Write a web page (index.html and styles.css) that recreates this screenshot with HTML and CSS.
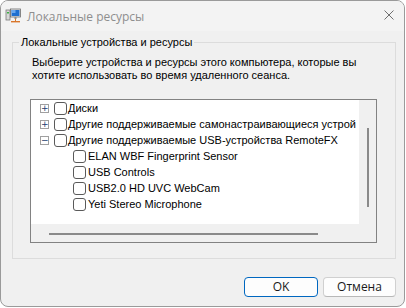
FILE: index.html
```html
<!DOCTYPE html>
<html lang="ru">
<head>
<meta charset="utf-8">
<title>Локальные ресурсы</title>
<link rel="stylesheet" href="styles.css">
</head>
<body>
<div class="window">
  <div class="titlebar">
    <svg class="app-icon" width="16" height="16" viewBox="0 0 16 16">
      <rect x="1" y="2" width="4" height="10" fill="#d8d8d8" stroke="#7a7a7a" stroke-width="0.8"/>
      <rect x="2" y="4" width="2" height="1.5" fill="#3cb043"/>
      <rect x="5.5" y="1" width="10" height="8" fill="#e8e8e8" stroke="#6b6b6b" stroke-width="0.8"/>
      <rect x="6.5" y="2" width="8" height="6" fill="#1f6fd0"/>
      <rect x="6.5" y="2" width="4" height="3" fill="#6aa8ee"/>
      <rect x="9.5" y="9" width="2" height="2" fill="#8a8a8a"/>
      <rect x="10" y="11" width="1" height="2" fill="#d9762b"/>
      <rect x="6" y="13" width="9" height="1.4" fill="#d9762b"/>
    </svg>
    <span class="title">Локальные ресурсы</span>
    <svg class="close" width="10" height="10" viewBox="0 0 10 10">
      <path d="M0.5 0.5 L9.5 9.5 M9.5 0.5 L0.5 9.5" stroke="#6e6e6e" stroke-width="1"/>
    </svg>
  </div>
  <div class="client">
    <fieldset class="group">
      <legend class="group-label">Локальные устройства и ресурсы</legend>
      <div class="group-body">
        <p class="desc">Выберите устройства и ресурсы этого компьютера, которые вы хотите использовать во время удаленного сеанса.</p>
        <div class="tree-box">
          <div class="tree-view">
            <div class="row">
              <span class="exp">+</span><span class="chk"></span><span class="label">Диски</span>
            </div>
            <div class="row">
              <span class="exp">+</span><span class="chk"></span><span class="label">Другие поддерживаемые самонастраивающиеся устрой</span>
            </div>
            <div class="row">
              <span class="exp minus">−</span><span class="chk"></span><span class="label">Другие поддерживаемые USB-устройства RemoteFX</span>
            </div>
            <div class="row child">
              <span class="chk"></span><span class="label">ELAN WBF Fingerprint Sensor</span>
            </div>
            <div class="row child">
              <span class="chk"></span><span class="label">USB Controls</span>
            </div>
            <div class="row child">
              <span class="chk"></span><span class="label">USB2.0 HD UVC WebCam</span>
            </div>
            <div class="row child">
              <span class="chk"></span><span class="label">Yeti Stereo Microphone</span>
            </div>
          </div>
          <div class="vscroll"><div class="vthumb"></div></div>
          <div class="hscroll"><div class="hthumb"></div></div>
          <div class="corner"></div>
        </div>
      </div>
    </fieldset>
    <div class="buttons">
      <button class="btn default">OK</button>
      <button class="btn">Отмена</button>
    </div>
  </div>
</div>
</body>
</html>
```

FILE: styles.css
```css
html, body {
  margin: 0;
  padding: 0;
  background: #ffffff;
}

.window {
  box-sizing: border-box;
  width: 405px;
  height: 307px;
  border: 1px solid #9a9a9a;
  border-radius: 8px;
  background: #f0f0f0;
  overflow: hidden;
  display: flex;
  flex-direction: column;
  font-family: "Liberation Sans", Arial, sans-serif;
}

.titlebar {
  height: 30px;
  flex: none;
  display: flex;
  align-items: center;
  background: #f3f3f3;
  padding-left: 4px;
}

.app-icon {
  flex: none;
  margin-top: -1px;
}

.title {
  margin-left: 6px;
  font-family: "Open Sans", "Noto Sans", sans-serif;
  font-size: 12px;
  color: #8e8e8e;
  flex: 1;
}

.close {
  margin-right: 10px;
  margin-top: -2px;
}

.client {
  flex: 1;
  display: flex;
  flex-direction: column;
  padding: 4px 8px 0 11px;
}

.group {
  margin: 0;
  padding: 0;
  border: 1px solid #dcdcdc;
  height: 224px;
  box-sizing: border-box;
  min-inline-size: 0;
  width: 384px;
}

.group-label {
  margin-left: 6px;
  padding: 0 2px;
  font-size: 11px;
  line-height: 14px;
  color: #000;
}

.group-body {
  padding: 7px 17px 0 17px;
}

.desc {
  margin: 0 0 0 2px;
  font-size: 11px;
  line-height: 13px;
  color: #000;
}

.tree-box {
  margin-top: 17px;
  width: 347px;
  height: 144px;
  box-sizing: border-box;
  border: 1px solid #828282;
  display: grid;
  grid-template-columns: 1fr 17px;
  grid-template-rows: 1fr 18px;
  background: #f0f0f0;
}

.tree-view {
  background: #fff;
  overflow: hidden;
}

.row {
  height: 16px;
  display: flex;
  align-items: center;
  padding-left: 9px;
  white-space: nowrap;
  font-size: 11px;
  color: #000;
}

.row.child {
  padding-left: 42px;
}

.exp {
  flex: none;
  box-sizing: border-box;
  width: 9px;
  height: 9px;
  border: 1px solid #a0a0a0;
  background: #fff;
  font-size: 9px;
  line-height: 7px;
  text-align: center;
  color: #1e3a6e;
  font-family: "DejaVu Sans", sans-serif;
  margin-right: 5px;
  overflow: hidden;
}

.chk {
  flex: none;
  box-sizing: border-box;
  width: 13px;
  height: 13px;
  border: 1px solid #5a5a5a;
  border-radius: 3px;
  background: #fff;
  margin-right: 1px;
}

.row.child .chk {
  margin-right: 2px;
}

.vscroll {
  display: flex;
  justify-content: center;
  padding-top: 28px;
}

.vthumb {
  width: 2px;
  height: 79px;
  background: #8a8a8a;
  margin-left: 1px;
}

.hscroll {
  display: flex;
  align-items: center;
  padding-left: 18px;
}

.hthumb {
  width: 269px;
  height: 2px;
  background: #8a8a8a;
  margin-top: 1px;
}

.buttons {
  display: flex;
  justify-content: flex-end;
  gap: 5px;
  margin-top: 18px;
}

.btn {
  box-sizing: border-box;
  height: 20px;
  width: 73px;
  border: 1px solid #d0d0d0;
  border-bottom-color: #b8b8b8;
  border-radius: 4px;
  background: #fdfdfd;
  font-family: "Open Sans", "Noto Sans", sans-serif;
  font-size: 12px;
  color: #1a1a1a;
  padding: 0;
  line-height: 18px;
}

.btn.default {
  width: 74px;
  border-color: #0067c0;
}
```
